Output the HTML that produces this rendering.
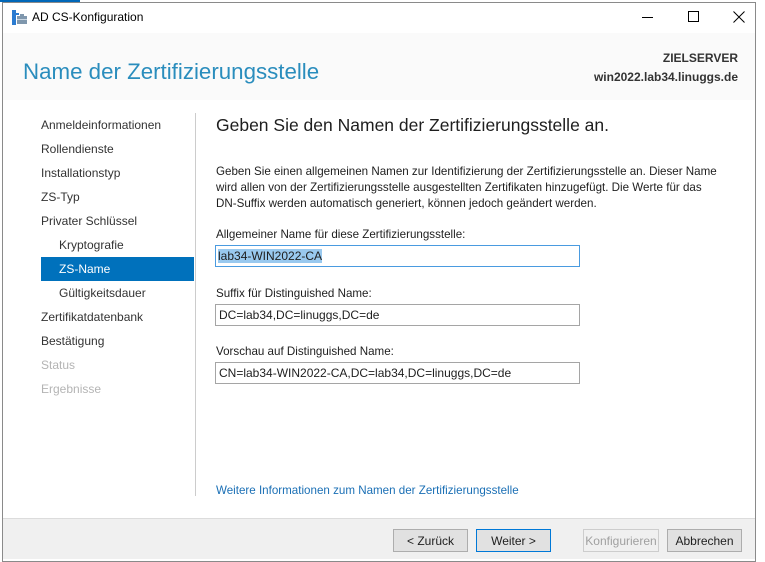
<!DOCTYPE html>
<html><head><meta charset="utf-8"><style>
*{margin:0;padding:0;box-sizing:border-box}
body{width:765px;height:559px;background:#fff;font-family:"Liberation Sans",sans-serif;font-size:12px;color:#1e1e1e;position:relative;overflow:hidden}
.a{position:absolute;white-space:nowrap}
#win{position:absolute;left:2px;top:2px;width:754px;height:560px;border:1px solid #8a8a8a;background:#fff}
.nav{font-size:12px;color:#333}
.dis{color:#b4b4b4}
.inp{position:absolute;left:215px;width:365px;height:22px;border:1px solid #a5a5a5;background:#fff;padding:3px 0 0 3px;font-size:12px}
.btn{position:absolute;top:529px;height:23px;border:1px solid #adadad;background:#e1e1e1;text-align:center;padding-top:4px;font-size:12px}
</style></head><body>
<div class="a" style="left:0;top:0;width:80px;height:2px;background:#0067b8"></div>
<div id="win"></div>
<div class="a" style="left:3px;top:33px;width:752px;height:485px;background:#fafafa"></div>
<div class="a" style="left:3px;top:100px;width:752px;height:418px;background:#fff"></div>
<div class="a" style="left:3px;top:518px;width:752px;height:41px;background:#f0f0f0;border-top:1px solid #dcdcdc"></div>
<svg class="a" style="left:12px;top:10px" width="16" height="16"><rect x="0" y="0" width="4" height="15" fill="#2b7bd0"/><rect x="4" y="3" width="3" height="2" fill="#2b7bd0"/><rect x="5" y="6" width="10" height="8" fill="#7f97ad"/><rect x="8" y="4" width="4" height="2" fill="#7f97ad"/><rect x="5" y="9" width="10" height="1" fill="#c9d6e2"/></svg>
<div class="a" style="left:32px;top:10px;font-size:12px;color:#000">AD CS-Konfiguration</div>
<div class="a" style="left:642px;top:17px;width:11px;height:1px;background:#000"></div>
<div class="a" style="left:688px;top:11px;width:11px;height:11px;border:1px solid #000"></div>
<svg class="a" style="left:733px;top:11px" width="12" height="12"><path d="M0.5 0.5L11.5 11.5M11.5 0.5L0.5 11.5" stroke="#000" stroke-width="1"/></svg>
<div class="a" style="left:23px;top:59px;font-size:22.3px;color:#2a8dbd">Name der Zertifizierungsstelle</div>
<div class="a" style="right:27px;top:51px;font-size:12px;font-weight:bold;color:#333">ZIELSERVER</div>
<div class="a" style="right:27px;top:70px;font-size:12px;font-weight:bold;color:#333">win2022.lab34.linuggs.de</div>
<div class="a" style="left:195px;top:113px;width:1px;height:383px;background:#ccc"></div>
<div class="a nav" style="left:41px;top:118px">Anmeldeinformationen</div>
<div class="a nav" style="left:41px;top:142px">Rollendienste</div>
<div class="a nav" style="left:41px;top:166px">Installationstyp</div>
<div class="a nav" style="left:41px;top:190px">ZS-Typ</div>
<div class="a nav" style="left:41px;top:214px">Privater Schlüssel</div>
<div class="a nav" style="left:59px;top:238px">Kryptografie</div>
<div class="a" style="left:41px;top:257px;width:153px;height:24px;background:#0071bc"></div>
<div class="a" style="left:59px;top:262px;color:#fff">ZS-Name</div>
<div class="a nav" style="left:59px;top:286px">Gültigkeitsdauer</div>
<div class="a nav" style="left:41px;top:310px">Zertifikatdatenbank</div>
<div class="a nav" style="left:41px;top:334px">Bestätigung</div>
<div class="a nav dis" style="left:41px;top:358px">Status</div>
<div class="a nav dis" style="left:41px;top:382px">Ergebnisse</div>
<div class="a" style="left:216px;top:115px;font-size:17.5px;color:#1e1e1e">Geben Sie den Namen der Zertifizierungsstelle an.</div>
<div class="a" style="left:216px;top:164px;line-height:16px;font-size:11.6px">Geben Sie einen allgemeinen Namen zur Identifizierung der Zertifizierungsstelle an. Dieser Name<br>wird allen von der Zertifizierungsstelle ausgestellten Zertifikaten hinzugefügt. Die Werte für das<br>DN-Suffix werden automatisch generiert, können jedoch geändert werden.</div>
<div class="a" style="left:216px;top:228px;font-size:11.6px">Allgemeiner Name für diese Zertifizierungsstelle:</div>
<div class="inp" style="top:245px;border-color:#4a9be0;padding-left:2px"><span style="background:#99c9ef">lab34-WIN2022-CA</span></div>
<div class="a" style="left:216px;top:287px;font-size:11.6px">Suffix für Distinguished Name:</div>
<div class="inp" style="top:304px">DC=lab34,DC=linuggs,DC=de</div>
<div class="a" style="left:216px;top:345px;font-size:11.6px">Vorschau auf Distinguished Name:</div>
<div class="inp" style="top:362px">CN=lab34-WIN2022-CA,DC=lab34,DC=linuggs,DC=de</div>
<div class="a" style="left:216px;top:484px;color:#1a6fb5;font-size:11.6px">Weitere Informationen zum Namen der Zertifizierungsstelle</div>
<div class="btn" style="left:393px;width:75px">&lt; Zurück</div>
<div class="btn" style="left:476px;width:75px;border-color:#0078d7">Weiter &gt;</div>
<div class="btn" style="left:583px;width:76px;background:#f0f0f0;border-color:#cdcdcd;color:#a0a0a0">Konfigurieren</div>
<div class="btn" style="left:667px;width:75px">Abbrechen</div>
</body></html>
